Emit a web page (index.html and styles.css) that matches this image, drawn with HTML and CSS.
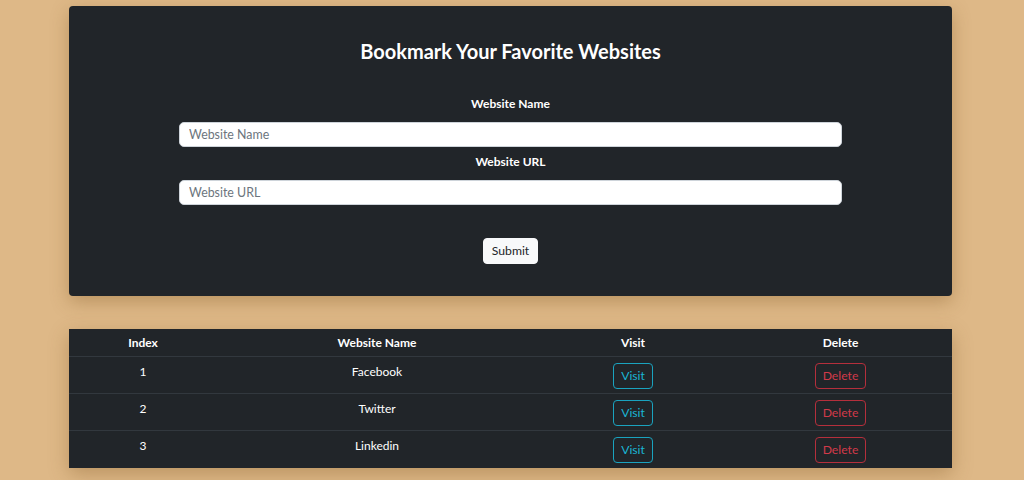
FILE: index.html
```html
<!DOCTYPE html>
<html lang="en">
<head>
<meta charset="utf-8">
<title>Bookmarks</title>
<link rel="stylesheet" href="styles.css">
</head>
<body>
<main class="container">
  <section class="card form-card">
    <h2 class="title">Bookmark Your Favorite Websites</h2>
    <form class="form">
      <label class="label" for="name">Website Name</label>
      <input class="input" id="name" type="text" placeholder="Website Name">
      <label class="label" for="url">Website URL</label>
      <input class="input" id="url" type="text" placeholder="Website URL">
      <button class="btn btn-light" type="button">Submit</button>
    </form>
  </section>

  <section class="card table-card">
    <table class="table">
      <colgroup>
        <col class="c1"><col class="c2"><col class="c3"><col class="c4">
      </colgroup>
      <thead>
        <tr><th>Index</th><th>Website Name</th><th>Visit</th><th>Delete</th></tr>
      </thead>
      <tbody>
        <tr><td>1</td><td>Facebook</td><td><button class="btn btn-info">Visit</button></td><td><button class="btn btn-danger">Delete</button></td></tr>
        <tr><td>2</td><td>Twitter</td><td><button class="btn btn-info">Visit</button></td><td><button class="btn btn-danger">Delete</button></td></tr>
        <tr><td>3</td><td>Linkedin</td><td><button class="btn btn-info">Visit</button></td><td><button class="btn btn-danger">Delete</button></td></tr>
      </tbody>
    </table>
  </section>
</main>
</body>
</html>
```

FILE: styles.css
```css
* { box-sizing: border-box; }
html, body { margin: 0; padding: 0; }
body {
  background: #deb887;
  font-family: "Lato", "Noto Sans", sans-serif;
  font-size: 12px;
  color: #fff;
  height: 480px;
  overflow: hidden;
}
.container {
  width: 883px;
  margin-left: 69px;
  padding-top: 6px;
  display: flex;
  flex-direction: column;
  gap: 33px;
}
.card {
  background: #212529;
  border-radius: 4px;
  box-shadow: 0 6px 18px rgba(120, 80, 30, 0.35);
}
.form-card {
  height: 290px;
  padding-top: 30px;
  display: flex;
  flex-direction: column;
  align-items: center;
}
.title {
  margin: 0;
  font-size: 20px;
  font-weight: 700;
  line-height: 30px;
}
.form {
  margin-top: 29px;
  width: 663px;
  display: flex;
  flex-direction: column;
  align-items: center;
}
.label {
  font-weight: 700;
  line-height: 18px;
  margin-bottom: 9px;
}
.input {
  width: 100%;
  height: 25px;
  border: 1px solid #ced4da;
  border-radius: 5px;
  background: #fff;
  padding: 0 9px;
  font-family: inherit;
  font-size: 12.4px;
  color: #212529;
  margin-bottom: 6px;
  outline: none;
}
.input::placeholder { color: #6c757d; }
.btn {
  font-family: inherit;
  font-size: 12.2px;
  line-height: 18px;
  border-radius: 4px;
  padding: 3px 7px;
  cursor: pointer;
}
.btn-light {
  margin-top: 27px;
  background: #f8f9fa;
  border: 1px solid #f8f9fa;
  color: #212529;
  height: 26px;
  padding: 3px 8px;
}
.table-card { border-radius: 0; }
.table {
  width: 100%;
  border-collapse: collapse;
  text-align: center;
}
.c1 { width: 148px; }
.c2 { width: 320px; }
.c3 { width: 192px; }
.c4 { width: 223px; }
.table th {
  font-weight: 700;
  height: 27px;
  padding: 0;
  line-height: 27px;
  border-bottom: 1px solid #32383e;
}
.table td {
  height: 37px;
  padding: 6px 0 0;
  vertical-align: top;
  line-height: 18px;
  border-bottom: 1px solid #32383e;
}
.table tbody tr:last-child td { border-bottom: 0; }
.table td .btn { margin-top: 0; height: 26px; }
.btn-info {
  background: transparent;
  border: 1px solid #1aa3bf;
  color: #1ab5d4;
}
.btn-danger {
  background: transparent;
  border: 1px solid #b52f3c;
  color: #d23a49;
}
```
